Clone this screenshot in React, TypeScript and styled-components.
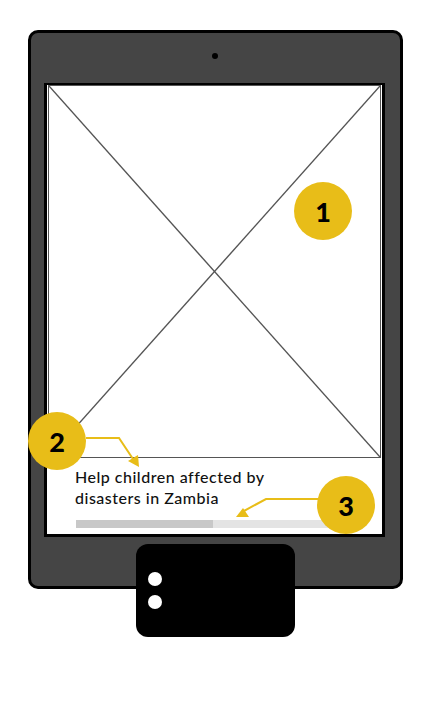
import React from "react";
import styled, { createGlobalStyle } from "styled-components";

const GlobalStyle = createGlobalStyle`
  html, body {
    margin: 0;
    padding: 0;
    background: #ffffff;
  }
  body {
    font-family: "Lato", "Liberation Sans", sans-serif;
  }
`;

const Page = styled.div`
  width: 429px;
  height: 727px;
  padding: 30px 0 0 28px;
  box-sizing: border-box;
  position: relative;
`;

const Tablet = styled.div`
  width: 375px;
  height: 559px;
  box-sizing: border-box;
  border: 3px solid #000;
  border-radius: 10px;
  background: #454545;
  padding: 0 15px 0 13px;
  display: flex;
  flex-direction: column;
  align-items: stretch;
`;

const CameraRow = styled.div`
  height: 50px;
  display: flex;
  justify-content: center;
  align-items: flex-start;
  padding-top: 20px;
  box-sizing: border-box;
`;

const Camera = styled.div`
  width: 6px;
  height: 6px;
  border-radius: 50%;
  background: #000;
`;

const Screen = styled.div`
  height: 454px;
  box-sizing: border-box;
  background: #fff;
  border-style: solid;
  border-color: #000;
  border-width: 2px 3px 3px 3px;
  display: flex;
  flex-direction: column;
`;

const Placeholder = styled.div`
  height: 373px;
  box-sizing: border-box;
  border: 1px solid #555;
  margin: 0 1px 0 1px;
  svg {
    display: block;
    width: 100%;
    height: 100%;
  }
`;

const Caption = styled.div`
  padding: 8px 0 0 28px;
  font-size: 16px;
  line-height: 21px;
  font-weight: 500;
  color: #111;
  letter-spacing: 0.5px;
`;

const Progress = styled.div`
  margin: 12px 0 0 29px;
  width: 280px;
  height: 8px;
  background: #e4e4e4;
`;

const ProgressFill = styled.div`
  height: 100%;
  background: #c8c8c8;
`;

const Dock = styled.div`
  width: 159px;
  height: 93px;
  margin: -45px 0 0 108px;
  position: relative;
  background: #000;
  border-radius: 12px;
  display: flex;
  flex-direction: column;
  justify-content: center;
  gap: 9px;
  padding-left: 12px;
  box-sizing: border-box;
`;

const DockDot = styled.div`
  width: 14px;
  height: 14px;
  border-radius: 50%;
  background: #fff;
`;

const Badge = styled.div<{ $x: number; $y: number }>`
  position: absolute;
  left: ${(p) => p.$x - 29}px;
  top: ${(p) => p.$y - 29}px;
  width: 58px;
  height: 58px;
  border-radius: 50%;
  background: #e8bd18;
  display: flex;
  align-items: center;
  justify-content: center;
  font-family: "Lato", "Liberation Sans", sans-serif;
  font-weight: 900;
  font-size: 27px;
  color: #000;
`;

const Arrows = styled.svg`
  position: absolute;
  left: 0;
  top: 0;
  pointer-events: none;
`;

const progress = 0.49;

export default function App() {
  return (
    <>
      <GlobalStyle />
      <Page>
        <Tablet>
          <CameraRow>
            <Camera />
          </CameraRow>
          <Screen>
            <Placeholder>
              <svg viewBox="0 0 100 100" preserveAspectRatio="none">
                <line x1="0" y1="0" x2="100" y2="100" stroke="#555" strokeWidth="1.4" vectorEffect="non-scaling-stroke" />
                <line x1="100" y1="0" x2="0" y2="100" stroke="#555" strokeWidth="1.4" vectorEffect="non-scaling-stroke" />
              </svg>
            </Placeholder>
            <Caption>
              Help children affected by
              <br />
              disasters in Zambia
            </Caption>
            <Progress>
              <ProgressFill style={{ width: `${progress * 100}%` }} />
            </Progress>
          </Screen>
        </Tablet>
        <Dock>
          <DockDot />
          <DockDot />
        </Dock>
        <Arrows width="429" height="727" viewBox="0 0 429 727">
          <polyline points="86,438 119,438 133,459" fill="none" stroke="#e8bd18" strokeWidth="2" />
          <polygon points="128,461 139,467 138,455" fill="#e8bd18" />
          <polyline points="318,499 266,499 242,512" fill="none" stroke="#e8bd18" strokeWidth="2" />
          <polygon points="236,517 249,517 243,508" fill="#e8bd18" />
        </Arrows>
        <Badge $x={323} $y={211}>1</Badge>
        <Badge $x={57} $y={441}>2</Badge>
        <Badge $x={346} $y={505}>3</Badge>
      </Page>
    </>
  );
}
